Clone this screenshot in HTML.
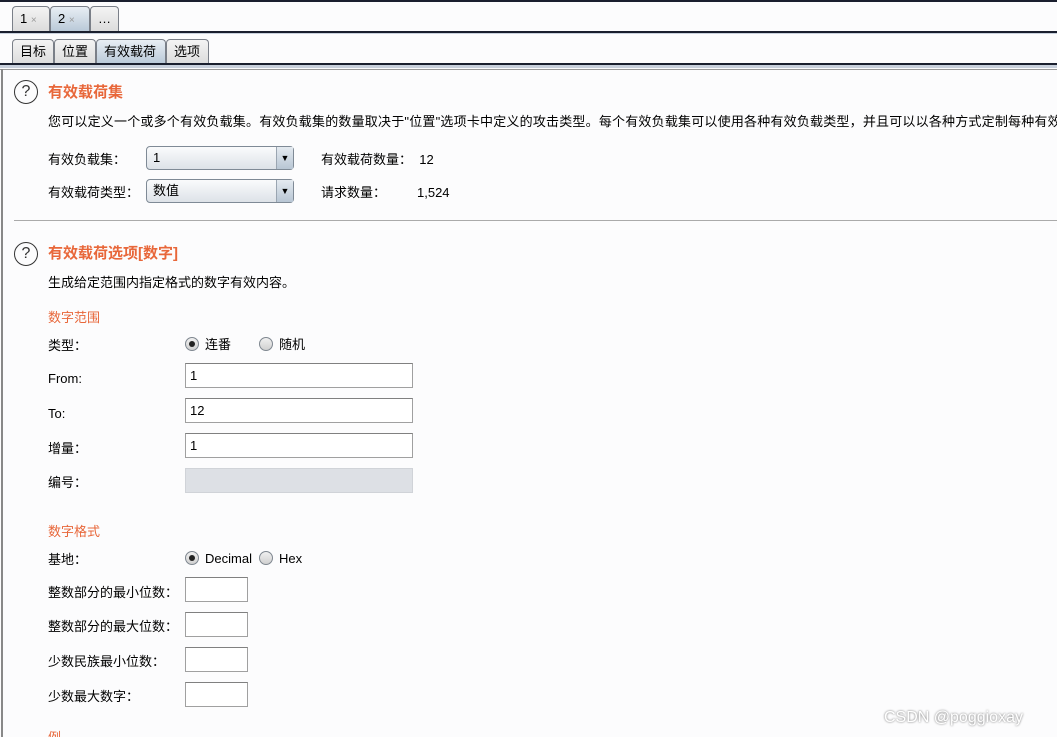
<!DOCTYPE html>
<html><head><meta charset="utf-8"><style>
*{margin:0;padding:0;box-sizing:border-box}
html,body{width:1057px;height:737px;overflow:hidden}
body{background:#fcfcfd;font-family:"Liberation Sans","Noto Sans CJK SC",sans-serif;font-size:13px;line-height:16px;color:#000;position:relative}
.a{position:absolute;white-space:nowrap;line-height:16px}
.x{margin-top:2px}
.tab{position:absolute;border:1px solid #7a7f88;border-bottom:none;border-radius:4px 4px 0 0;background:linear-gradient(#f4f4f4,#dcdcdc);height:25px;font-size:13px;line-height:16px;padding:4px 0 0 7px}
.tab.s{background:linear-gradient(#e8eef4,#b9c9d8)}
.hl{position:absolute;left:0;width:1057px}
.t{color:#e8673a;font-weight:bold;font-size:15px}
.o{color:#e8673a}
.q{position:absolute;width:24px;height:24px;border:1.5px solid #333;border-radius:50%;text-align:center;font-size:16px;line-height:21px;color:#333}
.sel{position:absolute;width:148px;height:24px;border:1px solid #7f8a96;border-radius:4px;background:linear-gradient(#fafbfc,#dde2e8);padding:3px 6px;line-height:16px}
.sel:after{content:"▼";position:absolute;right:0;top:0;width:16px;height:22px;border-left:1px solid #9aa5b1;font-size:9px;text-align:center;line-height:22px;background:linear-gradient(#e4eaf0,#b8c6d4)}
.in{position:absolute;border:1px solid #a0a0a0;border-top-color:#808080;background:#fff;height:25px;padding:4px 4px;line-height:16px}
.r{position:absolute;width:14px;height:14px;border:1px solid #7f8790;border-radius:50%;background:linear-gradient(#f0f0f0,#d0d0d0)}
.r.on:after{content:"";position:absolute;left:3px;top:3px;width:6px;height:6px;border-radius:50%;background:#222}
</style></head><body>
<div class="hl" style="top:0;height:2px;background:#1a1f2e"></div>
<div class="tab" style="left:12px;top:6px;width:38px">1 <span style="color:#999;font-size:10px">×</span></div>
<div class="tab s" style="left:50px;top:6px;width:40px">2 <span style="color:#999;font-size:10px">×</span></div>
<div class="tab" style="left:90px;top:6px;width:29px">…</div>
<div class="hl" style="top:31px;height:2px;background:#1a1f2e"></div>
<div class="hl" style="top:33px;height:1px;background:#c8d0dc"></div>
<div class="tab" style="left:12px;top:39px;width:42px">目标</div>
<div class="tab" style="left:54px;top:39px;width:42px">位置</div>
<div class="tab s" style="left:96px;top:39px;width:70px">有效载荷</div>
<div class="tab" style="left:166px;top:39px;width:43px">选项</div>
<div class="hl" style="top:63px;height:2px;background:#1a1f2e"></div>
<div class="hl" style="top:65px;height:3px;background:#c8d0dc"></div>
<div class="hl" style="top:69px;height:1px;background:#999"></div>
<div class="a" style="left:1px;top:69px;width:2px;height:668px;background:#888"></div>

<div class="q" style="left:14px;top:80px">?</div>
<div class="a t x" style="left:48px;top:83px">有效载荷集</div>
<div class="a x" style="left:48px;top:112px;width:1009px;overflow:hidden;letter-spacing:0.2px">您可以定义一个或多个有效负载集。有效负载集的数量取决于"位置"选项卡中定义的攻击类型。每个有效负载集可以使用各种有效负载类型，并且可以以各种方式定制每种有效负载类型。</div>
<div class="a x" style="left:48px;top:150px">有效负载集：</div>
<div class="sel" style="left:146px;top:146px">1</div>
<div class="a x" style="left:321px;top:150px">有效载荷数量：&nbsp; 12</div>
<div class="a x" style="left:48px;top:183px">有效载荷类型：</div>
<div class="sel" style="left:146px;top:179px">数值</div>
<div class="a x" style="left:321px;top:183px">请求数量：</div>
<div class="a x" style="left:417px;top:183px">1,524</div>
<div class="a" style="left:14px;top:220px;width:1043px;height:1px;background:#aaa"></div>

<div class="q" style="left:14px;top:242px">?</div>
<div class="a t x" style="left:48px;top:244px">有效载荷选项[数字]</div>
<div class="a x" style="left:48px;top:273px">生成给定范围内指定格式的数字有效内容。</div>
<div class="a o x" style="left:48px;top:308px">数字范围</div>
<div class="a x" style="left:48px;top:336px">类型：</div>
<div class="r on" style="left:185px;top:337px"></div><div class="a x" style="left:205px;top:335px">连番</div>
<div class="r" style="left:259px;top:337px"></div><div class="a x" style="left:279px;top:335px">随机</div>
<div class="a x" style="left:48px;top:369px">From:</div>
<div class="in" style="left:185px;top:363px;width:228px">1</div>
<div class="a x" style="left:48px;top:404px">To:</div>
<div class="in" style="left:185px;top:398px;width:228px">12</div>
<div class="a x" style="left:48px;top:439px">增量：</div>
<div class="in" style="left:185px;top:433px;width:228px">1</div>
<div class="a x" style="left:48px;top:473px">编号：</div>
<div class="in" style="left:185px;top:468px;width:228px;background:#dde0e5;border-color:#d0d3d8"></div>
<div class="a o x" style="left:48px;top:522px">数字格式</div>
<div class="a x" style="left:48px;top:550px">基地：</div>
<div class="r on" style="left:185px;top:551px"></div><div class="a x" style="left:205px;top:549px">Decimal</div>
<div class="r" style="left:259px;top:551px"></div><div class="a x" style="left:279px;top:549px">Hex</div>
<div class="a x" style="left:48px;top:583px">整数部分的最小位数：</div>
<div class="in" style="left:185px;top:577px;width:63px"></div>
<div class="a x" style="left:48px;top:617px">整数部分的最大位数：</div>
<div class="in" style="left:185px;top:612px;width:63px"></div>
<div class="a x" style="left:48px;top:652px">少数民族最小位数：</div>
<div class="in" style="left:185px;top:647px;width:63px"></div>
<div class="a x" style="left:48px;top:687px">少数最大数字：</div>
<div class="in" style="left:185px;top:682px;width:63px"></div>
<div class="a o x" style="left:48px;top:728px">例</div>
<div class="a" style="left:884px;top:709px;font-size:16px;line-height:18px;color:#fff;text-shadow:0 0 2px #666">CSDN @poggioxay</div>
</body></html>
